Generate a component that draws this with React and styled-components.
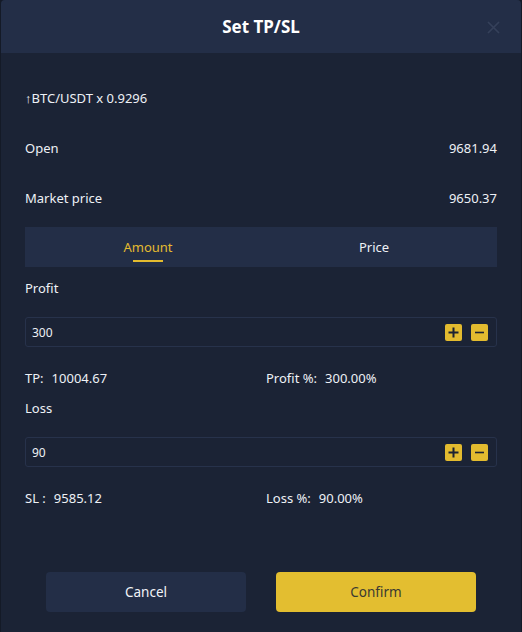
import React from 'react';
import styled, { createGlobalStyle } from 'styled-components';

const GlobalStyle = createGlobalStyle`
  html, body {
    margin: 0;
    padding: 0;
    background: #141a27;
  }
  body {
    font-family: "Noto Sans", "Open Sans", sans-serif;
    color: #eef1f6;
  }
`;

const PlusIcon = () => (
  <svg width="11" height="11" viewBox="0 0 11 11">
    <path d="M5.5 0.5v10M0.5 5.5h10" stroke="#1d2232" strokeWidth="2" />
  </svg>
);

const MinusIcon = () => (
  <svg width="11" height="11" viewBox="0 0 11 11">
    <path d="M1 5.5h9" stroke="#1d2232" strokeWidth="1.6" />
  </svg>
);

const CloseIcon = () => (
  <svg width="13" height="13" viewBox="0 0 13 13">
    <path d="M1 1l11 11M12 1L1 12" stroke="#35405a" strokeWidth="1.7" />
  </svg>
);

const Stepper = ({ value }) => (
  <InputBox>
    <InputValue>{value}</InputValue>
    <StepButtons>
      <StepButton><PlusIcon /></StepButton>
      <StepButton><MinusIcon /></StepButton>
    </StepButtons>
  </InputBox>
);

const Info = ({ label, value }) => (
  <InfoItem>
    <span>{label}</span>
    <span>{value}</span>
  </InfoItem>
);

const App = () => {
  return (
    <>
      <GlobalStyle />
      <Modal>
        <Header>
          <Title>Set TP/SL</Title>
          <CloseBtn><CloseIcon /></CloseBtn>
        </Header>
        <Body>
          <Row>↑BTC/USDT x 0.9296</Row>
          <Row>
            <span>Open</span>
            <span>9681.94</span>
          </Row>
          <Row>
            <span>Market price</span>
            <span>9650.37</span>
          </Row>
          <Tabs>
            <Tab active>Amount</Tab>
            <Tab>Price</Tab>
          </Tabs>
          <Label top={12}>Profit</Label>
          <Stepper value="300" />
          <InfoRow>
            <Info label="TP:" value="10004.67" />
            <Info label="Profit %:" value="300.00%" />
          </InfoRow>
          <Label top={11}>Loss</Label>
          <Stepper value="90" />
          <InfoRow>
            <Info label="SL :" value="9585.12" />
            <Info label="Loss %:" value="90.00%" />
          </InfoRow>
        </Body>
        <Footer>
          <Button>Cancel</Button>
          <Button primary>Confirm</Button>
        </Footer>
      </Modal>
    </>
  );
};

const Modal = styled.div`
  margin: 0 1px;
  height: 632px;
  background: #1b2335;
  border-radius: 4px 4px 0 0;
  overflow: hidden;
  display: flex;
  flex-direction: column;
`;

const Header = styled.div`
  height: 53px;
  background: #232e47;
  display: flex;
  align-items: center;
  justify-content: center;
  position: relative;
`;

const Title = styled.h2`
  margin: 0;
  font-size: 17px;
  font-weight: 700;
  color: #ffffff;
`;

const CloseBtn = styled.div`
  position: absolute;
  right: 21px;
  top: 21px;
  display: flex;
`;

const Body = styled.div`
  padding: 20px 24px 0;
  display: flex;
  flex-direction: column;
`;

const Row = styled.div`
  height: 50px;
  display: flex;
  align-items: center;
  justify-content: space-between;
  font-size: 13px;
`;

const Tabs = styled.div`
  margin-top: 4px;
  height: 40px;
  background: #232e47;
  display: grid;
  grid-template-columns: 1fr 1fr;
  padding: 0 10px;
`;

const Tab = styled.div`
  display: flex;
  align-items: center;
  justify-content: center;
  font-size: 13px;
  color: ${p => (p.active ? '#e3bb2f' : '#eef1f6')};
  position: relative;
  &::after {
    content: '';
    display: ${p => (p.active ? 'block' : 'none')};
    position: absolute;
    bottom: 5px;
    left: 50%;
    width: 30px;
    height: 2px;
    margin-left: -15px;
    background: #e3bb2f;
  }
`;

const Label = styled.div`
  margin-top: ${p => p.top}px;
  margin-bottom: 20px;
  line-height: 18px;
  font-size: 13px;
`;

const InputBox = styled.div`
  height: 30px;
  box-sizing: border-box;
  border: 1px solid #27324b;
  border-radius: 3px;
  display: flex;
  align-items: center;
  justify-content: space-between;
  padding: 0 8px 0 6px;
`;

const InputValue = styled.span`
  font-size: 12px;
`;

const StepButtons = styled.div`
  display: flex;
  gap: 9px;
`;

const StepButton = styled.div`
  width: 17px;
  height: 17px;
  background: #e3bb2f;
  border-radius: 2px;
  display: flex;
  align-items: center;
  justify-content: center;
`;

const InfoRow = styled.div`
  margin-top: 21px;
  line-height: 20px;
  font-size: 13px;
  display: grid;
  grid-template-columns: 241px 1fr;
`;

const InfoItem = styled.div`
  display: flex;
  gap: 8px;
`;

const Footer = styled.div`
  margin-top: 64px;
  display: flex;
  justify-content: center;
  gap: 30px;
`;

const Button = styled.button`
  width: 200px;
  height: 40px;
  border: none;
  border-radius: 4px;
  font-family: inherit;
  font-size: 13.5px;
  background: ${p => (p.primary ? '#e3be30' : '#232e47')};
  color: ${p => (p.primary ? '#3b3a32' : '#f2f4f8')};
  cursor: pointer;
`;

export default App;
